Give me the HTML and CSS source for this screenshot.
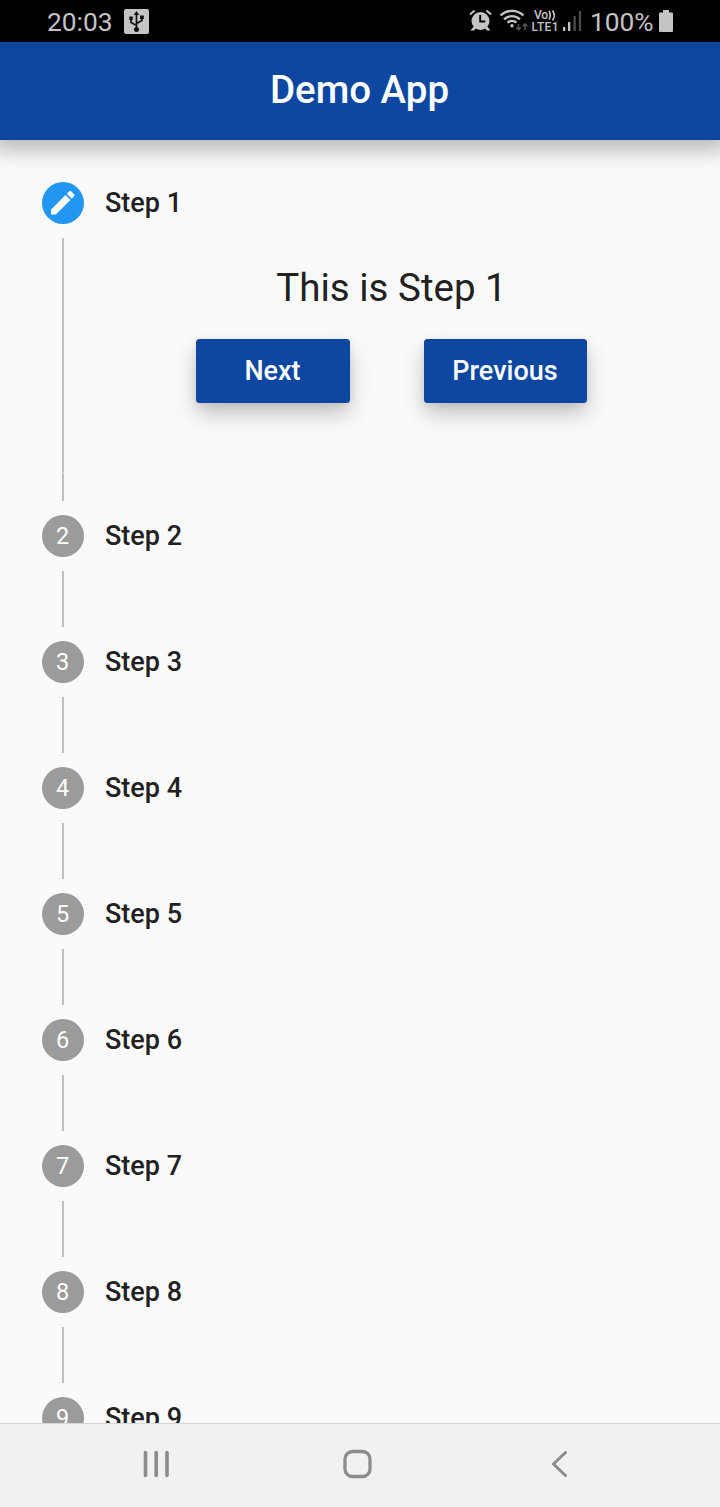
FILE: index.html
```html
<!DOCTYPE html>
<html lang="en">
<head>
<meta charset="utf-8">
<title>Demo App</title>
<link rel="stylesheet" href="styles.css">
</head>
<body>
<div class="screen">
  <div class="status">
    <span class="clock">20:03</span>
    <svg class="usb" width="25" height="25" viewBox="0 0 25 25"><rect width="25" height="25" rx="2" fill="#c4c4c4"/><g fill="none" stroke="#111" stroke-width="1.7"><path d="M12.5 19V5M12.5 16.5L7 13.500V9.500M12.500 14.500L18 11.500V8.500"/></g><path fill="#111" d="M12.500 2l2.800 4h-5.600zM5.300 7.500h3.500V11H5.300zM16 6.500h3.800V10H16z"/><circle cx="12.500" cy="20.500" r="2.500" fill="#111"/></svg>
    <svg class="indicators" width="115" height="26" viewBox="468 8 115 26">
      <g fill="#c4c4c4"><circle cx="480.500" cy="21" r="9"/><path d="M474 26l-3.500 4.500h3.500l2-2zM487 26l3.500 4.500h-3.500l-2-2z"/></g>
      <path d="M470 14.500l4.500-4M491 14.500l-4.500-4" stroke="#c4c4c4" stroke-width="2" fill="none"/>
      <path d="M480.200 15v6.500h5" stroke="#000" stroke-width="1.900" fill="none"/>
      <g fill="none" stroke="#c4c4c4" stroke-width="2.300"><path d="M500.500 15.500c6.500-6.300 16.500-6.300 23 0M504 19.300c4.500-4.300 11.500-4.300 16 0M507.500 22.700c2.600-2.300 6.400-2.300 9 0"/></g>
      <circle cx="512" cy="25.800" r="1.700" fill="#c4c4c4"/>
      <path d="M518.500 24v5.500M516.300 27.300l2.200 2.500 2.200-2.500M525 30v-6M522.800 26.300l2.200-2.500 2.200 2.500" fill="none" stroke="#555" stroke-width="1.500"/>
      <text class="network" x="534" y="19.300" textLength="14">Vo</text>
      <path d="M549 11q2.500 4 0 8.500M552.500 10.500q3.500 5 0 10" fill="none" stroke="#c4c4c4" stroke-width="1.700"/>
      <text class="network" x="531.500" y="31" textLength="27">LTE1</text>
      <path d="M563 27h2.300v4H563zM568 22h2.300v9H568z" fill="#c4c4c4"/><path d="M573.500 16h2.300v15h-2.300zM578.800 11h2.300v20h-2.300z" fill="#4b4b4b"/>
    </svg>
    <span class="percent">100%</span>
    <svg class="battery" width="14" height="22" viewBox="0 0 14 22"><path fill="#c4c4c4" d="M4 0h6v2.500h3q1 0 1 1V21q0 1-1 1H1q-1 0-1-1V3.500q0-1 1-1h3z"/></svg>
  </div>
  <header class="appbar"><h1 class="title">Demo App</h1></header>
  <main class="stepper">
    <section class="step">
      <div class="rail">
        <div class="badge active"><svg width="31.500" height="31.500" viewBox="0 0 24 24"><path fill="#fff" d="M3 17.250V21h3.750L17.810 9.940l-3.750-3.750L3 17.250zM20.710 7.040a1 1 0 0 0 0-1.410l-2.340-2.340a1 1 0 0 0-1.410 0l-1.830 1.830 3.750 3.750 1.830-1.830z"/></svg></div>
        <div class="line long"></div>
      </div>
      <div class="content">
        <div class="label">Step 1</div>
        <div class="panel">
          <p class="message">This is Step 1</p>
          <div class="actions"><button class="btn next">Next</button><button class="btn previous">Previous</button></div>
        </div>
      </div>
    </section>
    <section class="step"><div class="rail"><div class="badge">2</div><div class="line"></div></div><div class="label">Step 2</div></section>
    <section class="step"><div class="rail"><div class="badge">3</div><div class="line"></div></div><div class="label">Step 3</div></section>
    <section class="step"><div class="rail"><div class="badge">4</div><div class="line"></div></div><div class="label">Step 4</div></section>
    <section class="step"><div class="rail"><div class="badge">5</div><div class="line"></div></div><div class="label">Step 5</div></section>
    <section class="step"><div class="rail"><div class="badge">6</div><div class="line"></div></div><div class="label">Step 6</div></section>
    <section class="step"><div class="rail"><div class="badge">7</div><div class="line"></div></div><div class="label">Step 7</div></section>
    <section class="step"><div class="rail"><div class="badge">8</div><div class="line"></div></div><div class="label">Step 8</div></section>
    <section class="step"><div class="rail"><div class="badge">9</div><div class="line"></div></div><div class="label">Step 9</div></section>
  </main>
  <nav class="navbar">
    <svg width="28" height="30" viewBox="0 0 28 30"><path d="M3.500 3.500v23M14.200 3.500v23M25 3.500v23" stroke="#8c8c8c" stroke-width="3.600" stroke-linecap="round"/></svg>
    <svg class="home" width="30" height="30" viewBox="0 0 30 30"><rect x="2" y="2.500" width="25" height="25" rx="7.500" fill="none" stroke="#8c8c8c" stroke-width="3.300"/></svg>
    <svg class="back" width="20" height="30" viewBox="0 0 20 30"><path d="M16.500 3.500L4.500 15l12 11.500" fill="none" stroke="#8c8c8c" stroke-width="3" stroke-linecap="round"/></svg>
  </nav>
</div>
</body>
</html>
```
FILE: styles.css
```css
* { box-sizing: border-box; }
body { margin: 0; font-family: Roboto, "Liberation Sans", sans-serif; color: #212121; }
.screen { display: flex; flex-direction: column; height: 1507px; width: 720px; overflow: hidden; background: #fafafa; }
.status { height: 42px; flex: none; display: flex; align-items: center; padding-left: 47px; background: #000; color: #c4c4c4; font-size: 26.3px; line-height: 42px; }
.clock { width: 77px; padding-top: 1px; }
.usb { flex: none; }
.indicators { margin-left: 319px; flex: none; }
.network { font: 500 12px Roboto, sans-serif; fill: #c4c4c4; }
.percent { width: 69px; margin-left: 7px; padding-top: 1px; }
.battery { flex: none; }
.appbar { position: relative; height: 98px; flex: none; display: flex; align-items: center; justify-content: center; padding: 0 1px 2px 0; background: #0d47a1; box-shadow: 0 3px 20px 7px rgba(0,0,0,.27); clip-path: inset(0 0 -40px 0); }
.title { margin: 0; color: #fff; font-size: 38.5px; font-weight: 500; line-height: 46px; }
.stepper { flex: 1; min-height: 0; overflow: hidden; padding: 42px 42px 0; }
.step { display: flex; gap: 21px; }
.rail { width: 42px; flex: none; display: flex; flex-direction: column; align-items: center; }
.badge { width: 42px; height: 42px; border-radius: 50%; display: flex; align-items: center; justify-content: center; padding-right: 1px; background: #9b9b9b; color: #fff; font-size: 23.5px; line-height: 42px; }
.active { padding-right: 0; background: #2196f3; }
.line { width: 2px; height: 56px; margin: 14px 0; background: #c1c1c1; }
.long { height: 263px; background: linear-gradient(#c1c1c1 234px, #dedede 234px, #dedede 235px, #c1c1c1 235px); }
.content { flex: 1; }
.label { height: 42px; font-size: 27px; font-weight: 500; line-height: 42px; }
.panel { padding: 41px 0 0; }
.message { margin: 0; text-align: center; font-size: 38.5px; line-height: 46px; }
.actions { display: flex; gap: 74px; padding: 28.4px 0 0 91px; }
.btn { height: 63.5px; padding: 0 1px 0 0; border: 0; border-radius: 3.5px; background: #0d47a1; color: #fff; font: 500 27px/63px Roboto, sans-serif; box-shadow: 0 11px 21px rgba(0,0,0,.22), 0 2px 7px rgba(0,0,0,.07); }
.next { width: 154px; }
.previous { width: 163px; }
.navbar { height: 84px; flex: none; display: flex; align-items: center; padding: 0 0 4px 142px; border-top: 1px solid #d5d5d5; background: #f1f1f1; }
.home { margin-left: 172.5px; }
.back { margin-left: 176.5px; }
```
